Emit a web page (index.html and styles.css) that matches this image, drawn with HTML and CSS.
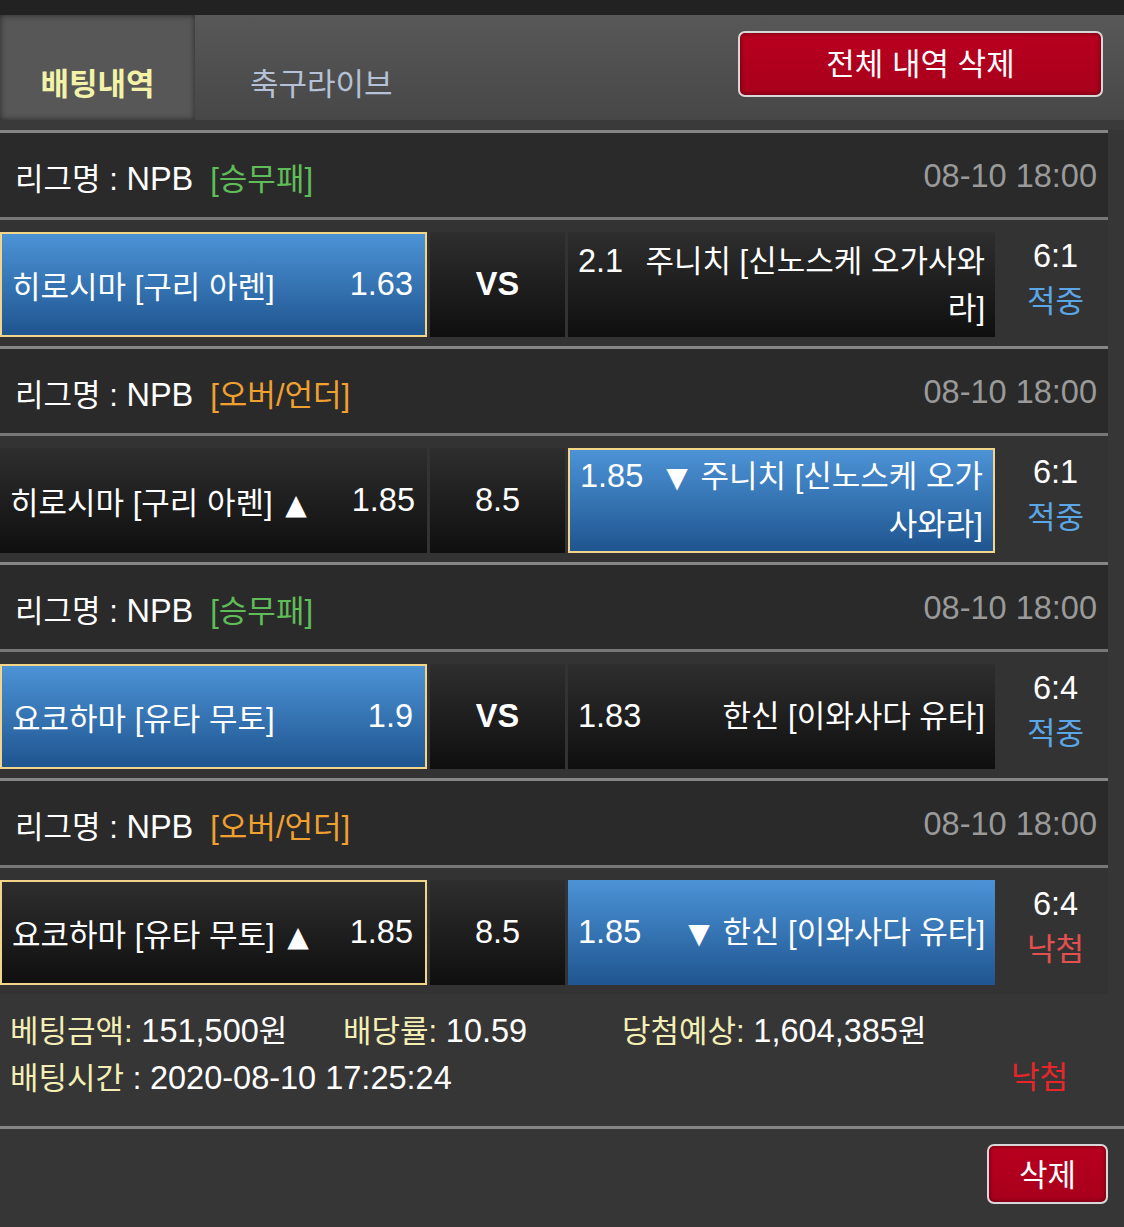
FILE: index.html
```html
<!DOCTYPE html>
<html lang="ko">
<head>
<meta charset="utf-8">
<link rel="stylesheet" href="styles.css">
</head>
<body>
<div class="topbar"></div>
<div class="head-area">
  <div class="tabs">
    <div class="tab active">배팅내역</div>
    <div class="tab">축구라이브</div>
    <button class="btn btn-all">전체 내역 삭제</button>
  </div>
</div>

<div class="list">
  <div class="group">
    <div class="league"><div><span>리그명 : <span class="lat">NPB</span></span><span class="type win">[승무패]</span></div><span class="date lat">08-10 18:00</span></div>
    <div class="row">
      <div class="cell home sel blue"><span class="name">히로시마 [구리 아렌]</span><span class="odd lat">1.63</span></div>
      <div class="cell mid dark"><b class="lat">VS</b></div>
      <div class="cell away dark"><div class="wrap close"><span class="aodd lat">2.1</span>주니치 [신노스케 오가사와<br>라]</div></div>
      <div class="result"><span class="lat">6:1</span><span class="hit">적중</span></div>
    </div>
  </div>

  <div class="group">
    <div class="league"><div><span>리그명 : <span class="lat">NPB</span></span><span class="type ou">[오버/언더]</span></div><span class="date lat">08-10 18:00</span></div>
    <div class="row">
      <div class="cell home dark"><span class="name">히로시마 [구리 아렌] <span class="tri">▲</span></span><span class="odd lat">1.85</span></div>
      <div class="cell mid dark"><span class="lat">8.5</span></div>
      <div class="cell away sel blue"><div class="wrap"><span class="aodd tight lat">1.85</span><span class="tri">▼</span> 주니치 [신노스케 오가<br>사와라]</div></div>
      <div class="result"><span class="lat">6:1</span><span class="hit">적중</span></div>
    </div>
  </div>

  <div class="group">
    <div class="league"><div><span>리그명 : <span class="lat">NPB</span></span><span class="type win">[승무패]</span></div><span class="date lat">08-10 18:00</span></div>
    <div class="row">
      <div class="cell home sel blue"><span class="name">요코하마 [유타 무토]</span><span class="odd lat">1.9</span></div>
      <div class="cell mid dark"><b class="lat">VS</b></div>
      <div class="cell away dark"><div class="wrap"><span class="aodd lat">1.83</span>한신 [이와사다 유타]</div></div>
      <div class="result"><span class="lat">6:4</span><span class="hit">적중</span></div>
    </div>
  </div>

  <div class="group">
    <div class="league"><div><span>리그명 : <span class="lat">NPB</span></span><span class="type ou">[오버/언더]</span></div><span class="date lat">08-10 18:00</span></div>
    <div class="row">
      <div class="cell home sel dark"><span class="name">요코하마 [유타 무토] <span class="tri">▲</span></span><span class="odd lat">1.85</span></div>
      <div class="cell mid dark"><span class="lat">8.5</span></div>
      <div class="cell away blue"><div class="wrap"><span class="aodd lat">1.85</span><span class="tri">▼</span> 한신 [이와사다 유타]</div></div>
      <div class="result"><span class="lat">6:4</span><span class="miss">낙첨</span></div>
    </div>
  </div>
</div>

<div class="summary">
  <div class="sum-line">
    <span class="s1"><span class="lbl">베팅금액:</span> <span class="lat">151,500</span>원</span>
    <span class="s2"><span class="lbl">배당률:</span> <span class="lat">10.59</span></span>
    <span class="s3"><span class="lbl">당첨예상:</span> <span class="lat">1,604,385</span>원</span>
  </div>
  <div class="sum-line2">
    <span><span class="lbl">배팅시간</span> : <span class="lat">2020-08-10 17:25:24</span></span>
    <span class="lost">낙첨</span>
  </div>
</div>

<div class="foot">
  <button class="btn btn-del">삭제</button>
</div>
</body>
</html>
```

FILE: styles.css
```css
* { box-sizing: border-box; }

body {
  margin: 0;
  background: #363636;
  color: #fff;
  font-family: "Liberation Sans", "Noto Sans CJK KR", sans-serif;
  font-size: 31px;
}

.lat {
  font-size: 32.5px;
}

.tri {
  font-family: "DejaVu Sans", sans-serif;
  font-size: 28px;
  margin: 0 4px;
}

.topbar {
  height: 15px;
  background: #222;
}

.head-area {
  background: #3a3a3a;
  padding-bottom: 10px;
}

.tabs {
  height: 105px;
  display: flex;
  align-items: flex-start;
  background: linear-gradient(#585858, #474747);
}

.tab {
  height: 105px;
  display: flex;
  align-items: center;
  padding-top: 27px;
  color: #b5c1d6;
  font-size: 31px;
}

.tab.active {
  width: 195px;
  justify-content: center;
  background: #575757;
  box-shadow: inset 0 0 6px rgba(0, 0, 0, 0.55);
  color: #f2f2a8;
  font-weight: bold;
}

.tab + .tab {
  padding-left: 55px;
}

.btn {
  font-family: inherit;
  color: #fff;
  background: linear-gradient(#b8001f, #a8001c);
  border: 2px solid #d8d8d8;
  border-radius: 7px;
  box-shadow: inset 0 0 4px rgba(0, 0, 0, 0.5);
  cursor: pointer;
}

.btn-all {
  margin: 16px 21px 0 auto;
  width: 365px;
  height: 66px;
  font-size: 31px;
  padding: 0 0 6px;
}

.list {
  width: 1108px;
}

.group {
  border-top: 3px solid #858585;
}

.league {
  height: 87px;
  background: #2a2a2a;
  border-bottom: 3px solid #777;
  display: flex;
  align-items: center;
  justify-content: space-between;
  padding: 3px 11px 0 15px;
}

.league .type {
  margin-left: 17px;
}

.type.win { color: #5fbd58; }
.type.ou { color: #f0a030; }

.date {
  color: #9a9a9a;
}

.row {
  height: 126px;
  padding: 12px 0 9px;
  display: flex;
  background: #333;
}

.cell {
  height: 105px;
  display: flex;
  align-items: center;
}

.dark {
  background: linear-gradient(#2e2e2e, #0f0f0f);
}

.blue {
  background: linear-gradient(#4c93d6, #1f5590);
}

.sel {
  border: 2px solid #f3d58a;
}

.home {
  width: 427px;
  justify-content: space-between;
  padding: 0 12px 0 10px;
}

.mid {
  width: 135px;
  margin-left: 3px;
  justify-content: center;
}

.away {
  width: 427px;
  margin-left: 3px;
  padding: 0 10px;
  justify-content: flex-end;
}

.away .wrap {
  width: 100%;
  text-align: right;
  line-height: 47px;
}

.aodd {
  float: left;
  margin-right: 24px;
}

.close .aodd {
  margin-right: 4px;
}

.aodd.tight {
  margin-right: 8px;
}

.result {
  flex: 1;
  display: flex;
  flex-direction: column;
  align-items: center;
  justify-content: center;
  line-height: 46px;
  padding-left: 8px;
  margin-top: -12px;
}

.hit { color: #5aa6e6; }
.miss { color: #e35050; }

.summary {
  padding: 14px 56px 24px 10px;
  line-height: 46px;
  border-bottom: 3px solid #858585;
}

.sum-line {
  display: flex;
}

.s1 { width: 333px; }
.s2 { width: 279px; }

.lbl { color: #f3efb4; }

.sum-line2 {
  display: flex;
  justify-content: space-between;
}

.lost { color: #e8262a; }

.foot {
  display: flex;
  justify-content: flex-end;
  padding: 15px 16px 0 0;
}

.btn-del {
  width: 121px;
  height: 60px;
  font-size: 31px;
  padding: 0 0 4px;
}
```
